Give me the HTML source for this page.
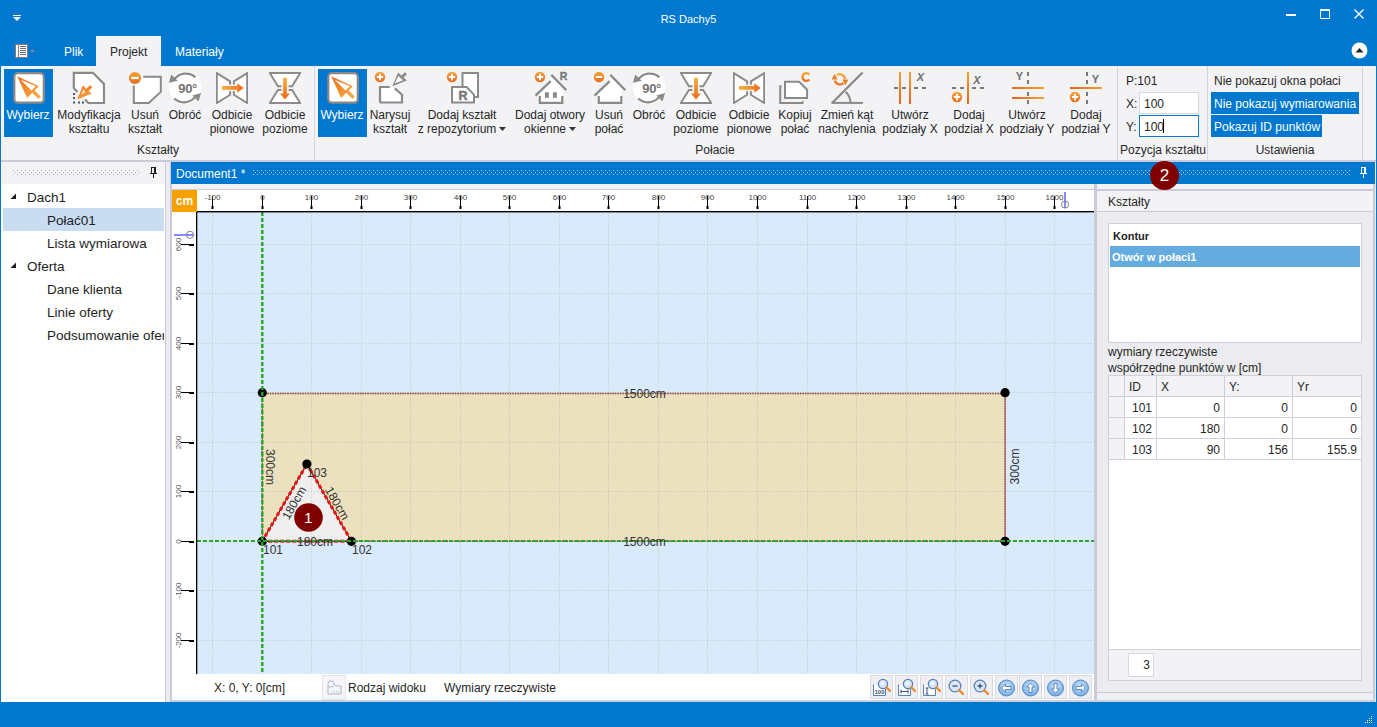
<!DOCTYPE html>
<html><head><meta charset="utf-8">
<style>
*{margin:0;padding:0;box-sizing:border-box}
html,body{width:1377px;height:727px;overflow:hidden}
body{position:relative;background:#0078cf;font-family:"Liberation Sans",sans-serif;font-size:12px;color:#262626}
.a{position:absolute}
.t{position:absolute;white-space:nowrap;line-height:14px}
.c{text-align:center}
svg{position:absolute;overflow:visible}
.dots{position:absolute;height:5px;background-image:radial-gradient(circle at 0.5px 0.5px,#bfc3d6 0.7px,transparent 0.8px);}
</style></head><body>

<!-- title bar -->
<div class="t" style="left:0;top:12px;width:1377px;text-align:center;color:#fff;font-size:11px">RS Dachy5</div>

<!-- tabs -->
<div class="a" style="left:96px;top:36px;width:65px;height:31px;background:#f3f3f6"></div>
<div class="t" style="left:64px;top:45px;color:#fff">Plik</div>
<div class="t" style="left:110px;top:45px;color:#262626">Projekt</div>
<div class="t" style="left:175px;top:45px;color:#fff">Materiały</div>

<!-- ribbon -->
<div class="a" style="left:1px;top:66px;width:1375px;height:95px;background:#f3f3f6"></div>
<div class="a" style="left:1px;top:160px;width:1375px;height:2px;background:#cacad8"></div>


<!-- ribbon content -->
<svg width="0" height="0"><defs>
<linearGradient id="og" x1="0" y1="0" x2="0.7" y2="1"><stop offset="0" stop-color="#ee6a1e"/><stop offset="1" stop-color="#f7a83e"/></linearGradient>
<linearGradient id="og2" x1="0" y1="0" x2="1" y2="0"><stop offset="0" stop-color="#f7b040"/><stop offset="1" stop-color="#ee6a1e"/></linearGradient>
<linearGradient id="og3" x1="0" y1="0" x2="0" y2="1"><stop offset="0" stop-color="#f7b040"/><stop offset="1" stop-color="#ee6a1e"/></linearGradient>
<symbol id="sel" viewBox="0 0 32 32"><rect x="1.3" y="1.2" width="29.5" height="29.5" rx="3.5" fill="#fff" stroke="#8c8888" stroke-width="2.2"/><path d="M4.2 4.2 L25.9 14.2 L21.5 18.5 L27.8 24.6 L25.5 26.9 L19.3 20.7 L14.1 26 Z M7.7 7.8 L18.5 18.6 L22.9 14.2 Z" fill="url(#og)" fill-rule="evenodd"/></symbol>
<symbol id="rot" viewBox="0 0 32 32"><circle cx="16.1" cy="15.6" r="16" fill="#fff"/><path d="M26.5 5.2 A14.5 14.5 0 0 0 5 7.8" fill="none" stroke="#8a8a8a" stroke-width="2.2"/><path d="M0.1 10.7 L2.1 2.6 L8.7 8.7 Z" fill="#8a8a8a"/><path d="M5.2 26.5 A14.5 14.5 0 0 0 27.2 23.5" fill="none" stroke="#8a8a8a" stroke-width="2.2"/><path d="M32.1 20.9 L29.5 29.5 L23.5 23.5 Z" fill="#8a8a8a"/><text x="18.6" y="20.9" font-size="13" font-weight="bold" text-anchor="middle" fill="#737373" font-family="Liberation Sans" letter-spacing="-0.3">90°</text></symbol>
<symbol id="fv" viewBox="0 0 32 32"><path d="M0.8 1.2 L14.1 9.4 V22.8 L0.8 31 Z M31.2 1.2 L17.9 9.4 V22.8 L31.2 31 Z" fill="#fff" stroke="#8c8c8c" stroke-width="2" stroke-linejoin="miter"/><rect x="13" y="12.6" width="6" height="6.6" fill="#f3f3f6"/><path d="M5.9 14.1 H21.2 V11.3 L27.8 15.9 L21.2 20.7 V17.7 H5.9 Z" fill="url(#og2)"/></symbol>
<symbol id="fh" viewBox="0 0 32 32"><path d="M0.8 1 H31.2 L23.1 14.3 H8.9 Z M0.8 31 H31.2 L23.1 17.9 H8.9 Z" fill="#fff" stroke="#8c8c8c" stroke-width="2"/><rect x="12.4" y="13" width="7.2" height="6.2" fill="#f3f3f6"/><path d="M14.1 5.7 H17.9 V21.4 H21 L16 27.5 L10.9 21.4 H14.1 Z" fill="url(#og3)"/></symbol>
<symbol id="pl" viewBox="0 0 14 14"><circle cx="7" cy="7" r="6.1" fill="url(#cg)"/><path d="M7 3.3 V10.7 M3.3 7 H10.7" stroke="#fff" stroke-width="2.2"/></symbol>
<symbol id="mi" viewBox="0 0 14 14"><circle cx="7" cy="7" r="6.1" fill="url(#cg)"/><path d="M3.2 7 H10.8" stroke="#fff" stroke-width="2.2"/></symbol>
<symbol id="house" viewBox="0 0 32 32"><path d="M4.8 31.2 V19.5 L15.7 9.1 L16.3 3.5 L27.3 14.5 V31.2 Z" fill="#fff"/><path d="M0.5 23.6 L15.7 9.1 M16.3 2.9 L31.4 18.1 M4.8 24 V30.9 H27.3 V24" fill="none" stroke="#8a8a8a" stroke-width="2.2"/></symbol>
<linearGradient id="cg" x1="0" y1="0" x2="0" y2="1"><stop offset="0" stop-color="#f6a535"/><stop offset="1" stop-color="#ea6b1f"/></linearGradient><linearGradient id="gv" x1="0" y1="0" x2="0" y2="32" gradientUnits="userSpaceOnUse"><stop offset="0" stop-color="#f5a030"/><stop offset="1" stop-color="#e8641c"/></linearGradient><linearGradient id="gh" x1="0" y1="0" x2="32" y2="0" gradientUnits="userSpaceOnUse"><stop offset="0" stop-color="#e8641c"/><stop offset="1" stop-color="#f5a030"/></linearGradient></defs></svg>

<div class="a" style="left:4px;top:69px;width:49px;height:68px;background:#0078cf"></div>
<svg style="left:13px;top:72px" width="32" height="32"><use href="#sel"/></svg>
<div class="t c" style="left:-22px;top:108px;width:100px;line-height:14px;color:#fff">Wybierz</div>

<svg style="left:73px;top:72px" width="32" height="32" viewBox="0 0 32 32"><path d="M0.8 0.8 H20 L31 12 V31 H15.4 L4 20 L0.8 16.4 Z" fill="#fff"/><path d="M0.8 16.4 V0.8 H20 L31 12 V31 H15.4 L12 27.4 M0.8 16.4 L4.6 20" fill="none" stroke="#8a8a8a" stroke-width="2.2"/><path d="M0 21 h2 v2 h-2z M0 25 h2 v2 h-2z M0 29.5 h2 v2 h-2z M5 29.5 h2 v2 h-2z M9 29.5 h2 v2 h-2z" fill="#555"/><path d="M4.1 27.6 L10.1 13.3 L13 17 L17 13 L19.5 15.5 L15.5 19 L18.9 21.6 Z" fill="url(#og)"/><path d="M8 23 L10.5 17 L12.5 20 Z" fill="#fff" opacity="0.8"/></svg>
<div class="t c" style="left:39px;top:108px;width:100px;line-height:14px">Modyfikacja<br>kształtu</div>

<svg style="left:129px;top:72px" width="33" height="32" viewBox="0 0 33 32"><path d="M4.8 4.8 H31.8 V19.9 L19.7 30.9 H4.8 Z" fill="#fff"/><path d="M14.2 4.8 H31.8 V19.9 L19.7 30.9 H4.8 V13.6" fill="none" stroke="#8a8a8a" stroke-width="2"/></svg>
<svg style="left:128px;top:71px" width="14" height="14"><use href="#mi"/></svg>
<div class="t c" style="left:95px;top:108px;width:100px;line-height:14px">Usuń<br>kształt</div>

<svg style="left:169px;top:72px" width="32" height="32"><use href="#rot"/></svg>
<div class="t c" style="left:135px;top:108px;width:100px;line-height:14px">Obróć</div>

<svg style="left:216px;top:72px" width="32" height="32"><use href="#fv"/></svg>
<div class="t c" style="left:182px;top:108px;width:100px;line-height:14px">Odbicie<br>pionowe</div>

<svg style="left:269px;top:72px" width="32" height="32"><use href="#fh"/></svg>
<div class="t c" style="left:235px;top:108px;width:100px;line-height:14px">Odbicie<br>poziome</div>

<div class="t c" style="left:108px;top:143px;width:100px">Kształty</div>
<div class="a" style="left:314px;top:66px;width:1px;height:94px;background:#d6d6e0"></div>

<div class="a" style="left:318px;top:69px;width:49px;height:68px;background:#0078cf"></div>
<svg style="left:327px;top:72px" width="32" height="32"><use href="#sel"/></svg>
<div class="t c" style="left:292px;top:108px;width:100px;line-height:14px;color:#fff">Wybierz</div>

<svg style="left:375px;top:72px" width="32" height="32" viewBox="0 0 32 32"><path d="M5 15 H15 L20 16.5 L27 22.5 V30.5 H5 Z" fill="#fff"/><path d="M5 30.5 V15 H14.7 M19.8 16.4 L27 22.8 V30.5 H5" fill="none" stroke="#8a8a8a" stroke-width="2.2"/><path d="M17.4 14.3 L23.1 0.6 L31.9 8.5 Z" fill="#8a8a8a"/><path d="M19.8 11.6 L23.4 4 L28 8.3 Z" fill="#fff"/><path d="M26 6 L31 1.3" stroke="#8a8a8a" stroke-width="2.8"/></svg>
<svg style="left:375px;top:72px" width="12" height="12" viewBox="1 1 12 12"><use href="#pl"/></svg>
<div class="t c" style="left:340px;top:108px;width:100px;line-height:14px">Narysuj<br>kształt</div>

<svg style="left:447px;top:72px" width="32" height="32" viewBox="0 0 32 32"><rect x="15.5" y="1" width="15.5" height="24" fill="#fff" stroke="#8a8a8a" stroke-width="2"/><path d="M5 15 H19.6 L27 22.6 V30.6 H5 Z" fill="#fff" stroke="#8a8a8a" stroke-width="2"/><text x="16" y="27.6" font-size="12.5" font-weight="bold" fill="#777" stroke="#777" stroke-width="0.5" text-anchor="middle" font-family="Liberation Sans">R</text></svg>
<svg style="left:447px;top:72px" width="12" height="12" viewBox="1 1 12 12"><use href="#pl"/></svg>
<div class="t c" style="left:412px;top:108px;width:100px;line-height:14px">Dodaj kształt<br>z repozytorium<svg style="position:relative;display:inline-block;vertical-align:middle;margin-left:3px;top:-1px" width="7" height="4" viewBox="0 0 7 4"><path d="M0 0H7L3.5 4Z" fill="#333"/></svg></div>

<svg style="left:535px;top:72px" width="32" height="32"><use href="#house"/></svg>
<svg style="left:535px;top:72px" width="32" height="32" viewBox="0 0 32 32"><rect x="9.9" y="20.3" width="4" height="5.5" fill="#8a8a8a"/><rect x="17.9" y="20.3" width="4" height="5.5" fill="#8a8a8a"/><text x="28.6" y="8" font-size="10.5" font-weight="bold" fill="#7a7a7a" stroke="#7a7a7a" stroke-width="0.4" text-anchor="middle" font-family="Liberation Sans">R</text></svg>
<svg style="left:535px;top:72px" width="12" height="12" viewBox="1 1 12 12"><use href="#pl"/></svg>
<div class="t c" style="left:500px;top:108px;width:100px;line-height:14px">Dodaj otwory<br>okienne<svg style="position:relative;display:inline-block;vertical-align:middle;margin-left:3px;top:-1px" width="7" height="4" viewBox="0 0 7 4"><path d="M0 0H7L3.5 4Z" fill="#333"/></svg></div>

<svg style="left:594px;top:72px" width="32" height="32"><use href="#house"/></svg>
<svg style="left:594px;top:72px" width="12" height="12" viewBox="1 1 12 12"><use href="#mi"/></svg>
<div class="t c" style="left:559px;top:108px;width:100px;line-height:14px">Usuń<br>połać</div>

<svg style="left:633px;top:72px" width="32" height="32"><use href="#rot"/></svg>
<div class="t c" style="left:599px;top:108px;width:100px;line-height:14px">Obróć</div>

<svg style="left:680px;top:72px" width="32" height="32"><use href="#fh"/></svg>
<div class="t c" style="left:646px;top:108px;width:100px;line-height:14px">Odbicie<br>poziome</div>

<svg style="left:733px;top:72px" width="32" height="32"><use href="#fv"/></svg>
<div class="t c" style="left:699px;top:108px;width:100px;line-height:14px">Odbicie<br>pionowe</div>

<svg style="left:779px;top:72px" width="33" height="32" viewBox="0 0 33 32"><path d="M2.6 14.3 H1.2 V31 H23.6 V29.3" fill="none" stroke="#8a8a8a" stroke-width="2"/><path d="M6 9.8 H20.2 L28.1 17.7 V26 H6 Z" fill="#fff" stroke="#8a8a8a" stroke-width="2"/><path d="M30.3 2.4 A3.9 3.9 0 1 0 30.3 7.6" fill="none" stroke="url(#cg)" stroke-width="2.3"/></svg>
<div class="t c" style="left:745px;top:108px;width:100px;line-height:14px">Kopiuj<br>połać</div>

<svg style="left:831px;top:72px" width="33" height="32" viewBox="0 0 33 32"><path d="M0.8 31.2 L31.6 0.5" stroke="#8a8a8a" stroke-width="2.3"/><path d="M0.6 30.9 H32" stroke="#8a8a8a" stroke-width="2"/><path d="M14.7 19.8 Q19 24 19.6 30.5" fill="none" stroke="#8a8a8a" stroke-width="2"/><path d="M3.9 8.6 A5 5 0 0 0 12.4 10.9 M6 3.2 A5 5 0 0 1 13.9 6.9" fill="none" stroke="url(#cg)" stroke-width="2.2"/><path d="M3.6 1.8 L0.6 7.6 H6.6 Z M14.4 13.2 L11.4 7.4 H17.4 Z" fill="#ef7f25"/></svg>
<div class="t c" style="left:797px;top:108px;width:100px;line-height:14px">Zmień kąt<br>nachylenia</div>

<svg style="left:894px;top:72px" width="32" height="32" viewBox="0 0 32 32"><rect x="5" y="0" width="2" height="32" fill="url(#gv)"/><rect x="15" y="0" width="2" height="32" fill="url(#gv)"/><path d="M0 15 h4 v2 h-4z M8 15 h4 v2 h-4z M20 15 h4 v2 h-4z M28 15 h4 v2 h-4z" fill="#7a7a7a"/><text x="26.3" y="9" font-size="11" font-weight="bold" font-style="italic" fill="#6e6e6e" text-anchor="middle" font-family="Liberation Sans">X</text></svg>
<div class="t c" style="left:860px;top:108px;width:100px;line-height:14px">Utwórz<br>podziały X</div>

<svg style="left:952px;top:72px" width="32" height="32" viewBox="0 0 32 32"><rect x="15" y="0" width="2" height="32" fill="url(#gv)"/><path d="M0 15 h4 v2 h-4z M8 15 h4 v2 h-4z M20 15 h4 v2 h-4z M28 15 h4 v2 h-4z" fill="#7a7a7a"/><text x="25" y="11.5" font-size="11" font-weight="bold" font-style="italic" fill="#6e6e6e" text-anchor="middle" font-family="Liberation Sans">X</text></svg>
<svg style="left:952px;top:91.8px" width="12" height="12" viewBox="1 1 12 12"><use href="#pl"/></svg>
<div class="t c" style="left:919px;top:108px;width:100px;line-height:14px">Dodaj<br>podział X</div>

<svg style="left:1012px;top:72px" width="32" height="32" viewBox="0 0 32 32"><rect x="0" y="15" width="32" height="2" fill="url(#gh)"/><rect x="0" y="25" width="32" height="2" fill="url(#gh)"/><path d="M15 0 h2 v4 h-2z M15 8 h2 v4 h-2z M15 20 h2 v4 h-2z M15 28 h2 v4 h-2z" fill="#7a7a7a"/><text x="7.4" y="7.8" font-size="11" font-weight="bold" fill="#6e6e6e" text-anchor="middle" font-family="Liberation Sans">Y</text></svg>
<div class="t c" style="left:977px;top:108px;width:100px;line-height:14px">Utwórz<br>podziały Y</div>

<svg style="left:1070px;top:72px" width="32" height="32" viewBox="0 0 32 32"><rect x="0" y="15" width="32" height="2" fill="url(#gh)"/><path d="M16 0 h2 v4 h-2z M16 8 h2 v4 h-2z M16 20 h2 v4 h-2z M16 28 h2 v4 h-2z" fill="#7a7a7a"/><text x="25.4" y="11" font-size="11" font-weight="bold" fill="#6e6e6e" text-anchor="middle" font-family="Liberation Sans">Y</text></svg>
<svg style="left:1070px;top:91.8px" width="12" height="12" viewBox="1 1 12 12"><use href="#pl"/></svg>
<div class="t c" style="left:1036px;top:108px;width:100px;line-height:14px">Dodaj<br>podział Y</div>

<div class="t c" style="left:665px;top:143px;width:100px">Połacie</div>
<div class="a" style="left:1117px;top:66px;width:1px;height:94px;background:#d6d6e0"></div>

<div class="t" style="left:1126px;top:74px">P:101</div>
<div class="t" style="left:1126px;top:97px">X:</div>
<div class="a" style="left:1139px;top:92px;width:60px;height:22px;background:#fff;border:1px solid #d8d8e2"></div>
<div class="t" style="left:1144px;top:97px">100</div>
<div class="t" style="left:1126px;top:120px">Y:</div>
<div class="a" style="left:1139px;top:115px;width:60px;height:22px;background:#fff;border:1px solid #0078cf"></div>
<div class="t" style="left:1144px;top:120px">100</div>
<div class="a" style="left:1163px;top:119px;width:1px;height:14px;background:#000"></div>
<div class="t c" style="left:1113px;top:143px;width:100px">Pozycja kształtu</div>
<div class="a" style="left:1207px;top:66px;width:1px;height:94px;background:#d6d6e0"></div>

<div class="t" style="left:1214px;top:74px">Nie pokazuj okna połaci</div>
<div class="a" style="left:1211px;top:92px;width:148px;height:22px;background:#0078cf"></div>
<div class="t" style="left:1214px;top:97px;color:#fff">Nie pokazuj wymiarowania</div>
<div class="a" style="left:1211px;top:115px;width:111px;height:22px;background:#0078cf"></div>
<div class="t" style="left:1214px;top:120px;color:#fff">Pokazuj ID punktów</div>
<div class="t c" style="left:1235px;top:143px;width:100px">Ustawienia</div>
<div class="a" style="left:1362px;top:66px;width:1px;height:94px;background:#d6d6e0"></div>

<!-- main area -->
<div class="a" style="left:1px;top:162px;width:1375px;height:540px;background:#ececf0"></div>
<div class="a" style="left:1px;top:162px;width:164px;height:22px;background:#f3f3f6"></div>
<svg style="left:13px;top:170px" width="127" height="5"><defs><pattern id="dp1" width="4" height="4" patternUnits="userSpaceOnUse"><rect x="0" y="0" width="1" height="1" fill="#b4b7cc"/><rect x="2" y="2" width="1" height="1" fill="#b4b7cc"/></pattern></defs><rect width="127" height="5" fill="url(#dp1)"/></svg>
<div class="a" style="left:1px;top:184px;width:164px;height:518px;background:#fff"></div>
<div class="a" style="left:165px;top:162px;width:1px;height:540px;background:#cacad8"></div>
<div class="a" style="left:170px;top:162px;width:2px;height:540px;background:#cacad8"></div>
<svg style="left:150px;top:166px" width="7" height="12" viewBox="0 0 7 12"><path d="M1 1 H6 V7 H1 Z M2 2 V7 H4 V2 Z M0 7 H7 V8 H0 Z M3 8 H4 V12 H3 Z" fill="#1e1e1e" fill-rule="evenodd"/></svg>
<div class="a" style="left:3px;top:208px;width:161px;height:23px;background:#c9ddf2"></div>
<div class="a" style="left:1px;top:184px;width:163px;height:517px;overflow:hidden">
<div class="t" style="left:26px;top:6px;font-size:13.5px;color:#1e1e1e;line-height:16px">Dach1</div>
<svg style="left:9px;top:9px" width="7" height="7" viewBox="0 0 7 7"><path d="M6 0.5 V6 H0.5 Z" fill="#1e1e1e"/></svg>
<div class="t" style="left:46px;top:29px;font-size:13.5px;color:#1e1e1e;line-height:16px">Połać01</div>
<div class="t" style="left:46px;top:52px;font-size:13.5px;color:#1e1e1e;line-height:16px">Lista wymiarowa</div>
<div class="t" style="left:26px;top:75px;font-size:13.5px;color:#1e1e1e;line-height:16px">Oferta</div>
<svg style="left:9px;top:78px" width="7" height="7" viewBox="0 0 7 7"><path d="M6 0.5 V6 H0.5 Z" fill="#1e1e1e"/></svg>
<div class="t" style="left:46px;top:98px;font-size:13.5px;color:#1e1e1e;line-height:16px">Dane klienta</div>
<div class="t" style="left:46px;top:121px;font-size:13.5px;color:#1e1e1e;line-height:16px">Linie oferty</div>
<div class="t" style="left:46px;top:144px;font-size:13.5px;color:#1e1e1e;line-height:16px">Podsumowanie oferty</div>
</div>
<div class="a" style="left:171px;top:162px;width:1204px;height:22px;background:#0078cf"></div>
<div class="t" style="left:176px;top:167px;color:#fff">Document1 *</div>
<svg style="left:253px;top:170px" width="1098" height="5"><defs><pattern id="dp2" width="4" height="4" patternUnits="userSpaceOnUse"><rect x="0" y="0" width="1" height="1" fill="#b9d3ef"/><rect x="2" y="2" width="1" height="1" fill="#b9d3ef"/></pattern></defs><rect width="1098" height="5" fill="url(#dp2)"/></svg>
<svg style="left:1360px;top:166px" width="7" height="12" viewBox="0 0 7 12"><path d="M1 1 H6 V7 H1 Z M2 2 V7 H4 V2 Z M0 7 H7 V8 H0 Z M3 8 H4 V12 H3 Z" fill="#fff" fill-rule="evenodd"/></svg>
<div class="a" style="left:172px;top:184px;width:1203px;height:5px;background:#f3f3f6"></div>
<div class="a" style="left:172px;top:189px;width:1203px;height:1px;background:#cacad8"></div>
<svg style="left:0;top:0" width="1377" height="727" viewBox="0 0 1377 727">
<defs><clipPath id="cv"><rect x="197" y="212" width="897" height="462"/></clipPath><clipPath id="rx"><rect x="197" y="190" width="897" height="21"/></clipPath><clipPath id="ry"><rect x="172" y="212" width="25" height="462"/></clipPath></defs>
<rect x="172" y="190" width="922" height="511" fill="#fff"/>
<rect x="197" y="212" width="897" height="462" fill="#d9eafa"/>
<g clip-path="url(#cv)">
<rect x="262.3" y="392.7" width="742.8" height="148.6" fill="#ebe1bf"/>
<path d="M262.3 541.3 L351.4 541.3 L306.9 464.0 Z" fill="#efefef"/>
<line x1="163.5" y1="212" x2="163.5" y2="674" stroke="rgba(120,130,140,0.05)" stroke-width="1"/><line x1="163.5" y1="212" x2="163.5" y2="674" stroke="rgba(110,110,115,0.17)" stroke-width="1" stroke-dasharray="1 2"/>
<line x1="212.5" y1="212" x2="212.5" y2="674" stroke="rgba(120,130,140,0.05)" stroke-width="1"/><line x1="212.5" y1="212" x2="212.5" y2="674" stroke="rgba(110,110,115,0.17)" stroke-width="1" stroke-dasharray="1 2"/>
<line x1="262.5" y1="212" x2="262.5" y2="674" stroke="rgba(120,130,140,0.05)" stroke-width="1"/><line x1="262.5" y1="212" x2="262.5" y2="674" stroke="rgba(110,110,115,0.17)" stroke-width="1" stroke-dasharray="1 2"/>
<line x1="311.5" y1="212" x2="311.5" y2="674" stroke="rgba(120,130,140,0.05)" stroke-width="1"/><line x1="311.5" y1="212" x2="311.5" y2="674" stroke="rgba(110,110,115,0.17)" stroke-width="1" stroke-dasharray="1 2"/>
<line x1="361.5" y1="212" x2="361.5" y2="674" stroke="rgba(120,130,140,0.05)" stroke-width="1"/><line x1="361.5" y1="212" x2="361.5" y2="674" stroke="rgba(110,110,115,0.17)" stroke-width="1" stroke-dasharray="1 2"/>
<line x1="410.5" y1="212" x2="410.5" y2="674" stroke="rgba(120,130,140,0.05)" stroke-width="1"/><line x1="410.5" y1="212" x2="410.5" y2="674" stroke="rgba(110,110,115,0.17)" stroke-width="1" stroke-dasharray="1 2"/>
<line x1="460.5" y1="212" x2="460.5" y2="674" stroke="rgba(120,130,140,0.05)" stroke-width="1"/><line x1="460.5" y1="212" x2="460.5" y2="674" stroke="rgba(110,110,115,0.17)" stroke-width="1" stroke-dasharray="1 2"/>
<line x1="509.5" y1="212" x2="509.5" y2="674" stroke="rgba(120,130,140,0.05)" stroke-width="1"/><line x1="509.5" y1="212" x2="509.5" y2="674" stroke="rgba(110,110,115,0.17)" stroke-width="1" stroke-dasharray="1 2"/>
<line x1="559.5" y1="212" x2="559.5" y2="674" stroke="rgba(120,130,140,0.05)" stroke-width="1"/><line x1="559.5" y1="212" x2="559.5" y2="674" stroke="rgba(110,110,115,0.17)" stroke-width="1" stroke-dasharray="1 2"/>
<line x1="608.5" y1="212" x2="608.5" y2="674" stroke="rgba(120,130,140,0.05)" stroke-width="1"/><line x1="608.5" y1="212" x2="608.5" y2="674" stroke="rgba(110,110,115,0.17)" stroke-width="1" stroke-dasharray="1 2"/>
<line x1="658.5" y1="212" x2="658.5" y2="674" stroke="rgba(120,130,140,0.05)" stroke-width="1"/><line x1="658.5" y1="212" x2="658.5" y2="674" stroke="rgba(110,110,115,0.17)" stroke-width="1" stroke-dasharray="1 2"/>
<line x1="707.5" y1="212" x2="707.5" y2="674" stroke="rgba(120,130,140,0.05)" stroke-width="1"/><line x1="707.5" y1="212" x2="707.5" y2="674" stroke="rgba(110,110,115,0.17)" stroke-width="1" stroke-dasharray="1 2"/>
<line x1="757.5" y1="212" x2="757.5" y2="674" stroke="rgba(120,130,140,0.05)" stroke-width="1"/><line x1="757.5" y1="212" x2="757.5" y2="674" stroke="rgba(110,110,115,0.17)" stroke-width="1" stroke-dasharray="1 2"/>
<line x1="807.5" y1="212" x2="807.5" y2="674" stroke="rgba(120,130,140,0.05)" stroke-width="1"/><line x1="807.5" y1="212" x2="807.5" y2="674" stroke="rgba(110,110,115,0.17)" stroke-width="1" stroke-dasharray="1 2"/>
<line x1="856.5" y1="212" x2="856.5" y2="674" stroke="rgba(120,130,140,0.05)" stroke-width="1"/><line x1="856.5" y1="212" x2="856.5" y2="674" stroke="rgba(110,110,115,0.17)" stroke-width="1" stroke-dasharray="1 2"/>
<line x1="906.5" y1="212" x2="906.5" y2="674" stroke="rgba(120,130,140,0.05)" stroke-width="1"/><line x1="906.5" y1="212" x2="906.5" y2="674" stroke="rgba(110,110,115,0.17)" stroke-width="1" stroke-dasharray="1 2"/>
<line x1="955.5" y1="212" x2="955.5" y2="674" stroke="rgba(120,130,140,0.05)" stroke-width="1"/><line x1="955.5" y1="212" x2="955.5" y2="674" stroke="rgba(110,110,115,0.17)" stroke-width="1" stroke-dasharray="1 2"/>
<line x1="1005.5" y1="212" x2="1005.5" y2="674" stroke="rgba(120,130,140,0.05)" stroke-width="1"/><line x1="1005.5" y1="212" x2="1005.5" y2="674" stroke="rgba(110,110,115,0.17)" stroke-width="1" stroke-dasharray="1 2"/>
<line x1="1054.5" y1="212" x2="1054.5" y2="674" stroke="rgba(120,130,140,0.05)" stroke-width="1"/><line x1="1054.5" y1="212" x2="1054.5" y2="674" stroke="rgba(110,110,115,0.17)" stroke-width="1" stroke-dasharray="1 2"/>
<line x1="1104.5" y1="212" x2="1104.5" y2="674" stroke="rgba(120,130,140,0.05)" stroke-width="1"/><line x1="1104.5" y1="212" x2="1104.5" y2="674" stroke="rgba(110,110,115,0.17)" stroke-width="1" stroke-dasharray="1 2"/>
<line x1="1153.5" y1="212" x2="1153.5" y2="674" stroke="rgba(120,130,140,0.05)" stroke-width="1"/><line x1="1153.5" y1="212" x2="1153.5" y2="674" stroke="rgba(110,110,115,0.17)" stroke-width="1" stroke-dasharray="1 2"/>
<line x1="197" y1="689.5" x2="1094" y2="689.5" stroke="rgba(120,130,140,0.05)" stroke-width="1"/><line x1="197" y1="689.5" x2="1094" y2="689.5" stroke="rgba(110,110,115,0.17)" stroke-width="1" stroke-dasharray="1 2"/>
<line x1="197" y1="640.5" x2="1094" y2="640.5" stroke="rgba(120,130,140,0.05)" stroke-width="1"/><line x1="197" y1="640.5" x2="1094" y2="640.5" stroke="rgba(110,110,115,0.17)" stroke-width="1" stroke-dasharray="1 2"/>
<line x1="197" y1="590.5" x2="1094" y2="590.5" stroke="rgba(120,130,140,0.05)" stroke-width="1"/><line x1="197" y1="590.5" x2="1094" y2="590.5" stroke="rgba(110,110,115,0.17)" stroke-width="1" stroke-dasharray="1 2"/>
<line x1="197" y1="541.5" x2="1094" y2="541.5" stroke="rgba(120,130,140,0.05)" stroke-width="1"/><line x1="197" y1="541.5" x2="1094" y2="541.5" stroke="rgba(110,110,115,0.17)" stroke-width="1" stroke-dasharray="1 2"/>
<line x1="197" y1="491.5" x2="1094" y2="491.5" stroke="rgba(120,130,140,0.05)" stroke-width="1"/><line x1="197" y1="491.5" x2="1094" y2="491.5" stroke="rgba(110,110,115,0.17)" stroke-width="1" stroke-dasharray="1 2"/>
<line x1="197" y1="442.5" x2="1094" y2="442.5" stroke="rgba(120,130,140,0.05)" stroke-width="1"/><line x1="197" y1="442.5" x2="1094" y2="442.5" stroke="rgba(110,110,115,0.17)" stroke-width="1" stroke-dasharray="1 2"/>
<line x1="197" y1="392.5" x2="1094" y2="392.5" stroke="rgba(120,130,140,0.05)" stroke-width="1"/><line x1="197" y1="392.5" x2="1094" y2="392.5" stroke="rgba(110,110,115,0.17)" stroke-width="1" stroke-dasharray="1 2"/>
<line x1="197" y1="343.5" x2="1094" y2="343.5" stroke="rgba(120,130,140,0.05)" stroke-width="1"/><line x1="197" y1="343.5" x2="1094" y2="343.5" stroke="rgba(110,110,115,0.17)" stroke-width="1" stroke-dasharray="1 2"/>
<line x1="197" y1="293.5" x2="1094" y2="293.5" stroke="rgba(120,130,140,0.05)" stroke-width="1"/><line x1="197" y1="293.5" x2="1094" y2="293.5" stroke="rgba(110,110,115,0.17)" stroke-width="1" stroke-dasharray="1 2"/>
<line x1="197" y1="244.5" x2="1094" y2="244.5" stroke="rgba(120,130,140,0.05)" stroke-width="1"/><line x1="197" y1="244.5" x2="1094" y2="244.5" stroke="rgba(110,110,115,0.17)" stroke-width="1" stroke-dasharray="1 2"/>
<line x1="197" y1="194.5" x2="1094" y2="194.5" stroke="rgba(120,130,140,0.05)" stroke-width="1"/><line x1="197" y1="194.5" x2="1094" y2="194.5" stroke="rgba(110,110,115,0.17)" stroke-width="1" stroke-dasharray="1 2"/>
<path d="M262.3 393.5 H1005.1 V541.3 H262.3 Z" fill="none" stroke="#8a3838" stroke-width="1.4" stroke-dasharray="1.5 1"/>
<path d="M262.3 541.3 L351.4 541.3 L306.9 464.0 Z" fill="none" stroke="#111" stroke-width="1"/>
<path d="M262.3 541.3 L351.4 541.3 L306.9 464.0 Z" fill="none" stroke="#ee1111" stroke-width="3" stroke-dasharray="4 2"/>
<line x1="1005.1" y1="392.7" x2="1005.1" y2="541.3" stroke="#b06060" stroke-width="1"/>
<circle cx="262.3" cy="392.7" r="4.6" fill="#000"/>
<circle cx="1005.1" cy="392.7" r="4.6" fill="#000"/>
<circle cx="1005.1" cy="541.3" r="4.6" fill="#000"/>
<circle cx="262.3" cy="541.3" r="4.6" fill="#000"/>
<circle cx="351.4" cy="541.3" r="4.6" fill="#000"/>
<circle cx="306.9" cy="464.0" r="4.6" fill="#000"/>
<line x1="262.3" y1="212" x2="262.3" y2="674" stroke="#2aa52a" stroke-width="2.4" stroke-dasharray="4 2"/>
<line x1="197" y1="541.0" x2="1094" y2="541.0" stroke="#2aa52a" stroke-width="2" stroke-dasharray="4 2"/>
<text x="644.5" y="398.0" font-size="12" fill="#333" text-anchor="middle" font-family="Liberation Sans">1500cm</text>
<text x="644.5" y="546.0" font-size="12" fill="#333" text-anchor="middle" font-family="Liberation Sans">1500cm</text>
<text x="315.0" y="546.0" font-size="12" fill="#333" text-anchor="middle" font-family="Liberation Sans">180cm</text>
<text dominant-baseline="central" x="1014.6" y="466.5" font-size="12" fill="#333" text-anchor="middle" font-family="Liberation Sans" transform="rotate(-90 1014.6 466.5)">300cm</text>
<text x="266.0" y="467.0" font-size="12" fill="#333" text-anchor="middle" font-family="Liberation Sans" transform="rotate(90 266.0 467.0)">300cm</text>
<text x="263.0" y="554.0" font-size="12" fill="#333" text-anchor="start" font-family="Liberation Sans">101</text>
<text x="352.0" y="554.0" font-size="12" fill="#333" text-anchor="start" font-family="Liberation Sans">102</text>
<text x="307.0" y="477.0" font-size="12" fill="#333" text-anchor="start" font-family="Liberation Sans">103</text>
<text dominant-baseline="central" x="294.2" y="503.0" font-size="12" fill="#333" text-anchor="middle" font-family="Liberation Sans" transform="rotate(-60 294.2 503.0)">180cm</text>
<text dominant-baseline="central" x="337.1" y="503.4" font-size="12" fill="#333" text-anchor="middle" font-family="Liberation Sans" transform="rotate(60 337.1 503.4)">180cm</text>
<circle cx="308.5" cy="517.5" r="14.3" fill="#800000"/>
<text x="308.2" y="522.8" font-size="15.5" fill="#fff" text-anchor="middle" font-family="Liberation Sans">1</text>
</g>
<g clip-path="url(#rx)">
<line x1="212.5" y1="196" x2="212.5" y2="209" stroke="#000" stroke-width="1"/>
<rect x="211.5" y="206" width="2" height="3" fill="#000"/>
<text x="212.5" y="200.0" font-size="8" fill="#444" text-anchor="middle" font-family="Liberation Sans">-100</text>
<line x1="262.5" y1="196" x2="262.5" y2="209" stroke="#000" stroke-width="1"/>
<rect x="261.5" y="206" width="2" height="3" fill="#000"/>
<text x="262.5" y="200.0" font-size="8" fill="#444" text-anchor="middle" font-family="Liberation Sans">0</text>
<line x1="311.5" y1="196" x2="311.5" y2="209" stroke="#000" stroke-width="1"/>
<rect x="310.5" y="206" width="2" height="3" fill="#000"/>
<text x="311.5" y="200.0" font-size="8" fill="#444" text-anchor="middle" font-family="Liberation Sans">100</text>
<line x1="361.5" y1="196" x2="361.5" y2="209" stroke="#000" stroke-width="1"/>
<rect x="360.5" y="206" width="2" height="3" fill="#000"/>
<text x="361.5" y="200.0" font-size="8" fill="#444" text-anchor="middle" font-family="Liberation Sans">200</text>
<line x1="410.5" y1="196" x2="410.5" y2="209" stroke="#000" stroke-width="1"/>
<rect x="409.5" y="206" width="2" height="3" fill="#000"/>
<text x="410.5" y="200.0" font-size="8" fill="#444" text-anchor="middle" font-family="Liberation Sans">300</text>
<line x1="460.5" y1="196" x2="460.5" y2="209" stroke="#000" stroke-width="1"/>
<rect x="459.5" y="206" width="2" height="3" fill="#000"/>
<text x="460.5" y="200.0" font-size="8" fill="#444" text-anchor="middle" font-family="Liberation Sans">400</text>
<line x1="509.5" y1="196" x2="509.5" y2="209" stroke="#000" stroke-width="1"/>
<rect x="508.5" y="206" width="2" height="3" fill="#000"/>
<text x="509.5" y="200.0" font-size="8" fill="#444" text-anchor="middle" font-family="Liberation Sans">500</text>
<line x1="559.5" y1="196" x2="559.5" y2="209" stroke="#000" stroke-width="1"/>
<rect x="558.5" y="206" width="2" height="3" fill="#000"/>
<text x="559.5" y="200.0" font-size="8" fill="#444" text-anchor="middle" font-family="Liberation Sans">600</text>
<line x1="608.5" y1="196" x2="608.5" y2="209" stroke="#000" stroke-width="1"/>
<rect x="607.5" y="206" width="2" height="3" fill="#000"/>
<text x="608.5" y="200.0" font-size="8" fill="#444" text-anchor="middle" font-family="Liberation Sans">700</text>
<line x1="658.5" y1="196" x2="658.5" y2="209" stroke="#000" stroke-width="1"/>
<rect x="657.5" y="206" width="2" height="3" fill="#000"/>
<text x="658.5" y="200.0" font-size="8" fill="#444" text-anchor="middle" font-family="Liberation Sans">800</text>
<line x1="707.5" y1="196" x2="707.5" y2="209" stroke="#000" stroke-width="1"/>
<rect x="706.5" y="206" width="2" height="3" fill="#000"/>
<text x="707.5" y="200.0" font-size="8" fill="#444" text-anchor="middle" font-family="Liberation Sans">900</text>
<line x1="757.5" y1="196" x2="757.5" y2="209" stroke="#000" stroke-width="1"/>
<rect x="756.5" y="206" width="2" height="3" fill="#000"/>
<text x="757.5" y="200.0" font-size="8" fill="#444" text-anchor="middle" font-family="Liberation Sans">1000</text>
<line x1="807.5" y1="196" x2="807.5" y2="209" stroke="#000" stroke-width="1"/>
<rect x="806.5" y="206" width="2" height="3" fill="#000"/>
<text x="807.5" y="200.0" font-size="8" fill="#444" text-anchor="middle" font-family="Liberation Sans">1100</text>
<line x1="856.5" y1="196" x2="856.5" y2="209" stroke="#000" stroke-width="1"/>
<rect x="855.5" y="206" width="2" height="3" fill="#000"/>
<text x="856.5" y="200.0" font-size="8" fill="#444" text-anchor="middle" font-family="Liberation Sans">1200</text>
<line x1="906.5" y1="196" x2="906.5" y2="209" stroke="#000" stroke-width="1"/>
<rect x="905.5" y="206" width="2" height="3" fill="#000"/>
<text x="906.5" y="200.0" font-size="8" fill="#444" text-anchor="middle" font-family="Liberation Sans">1300</text>
<line x1="955.5" y1="196" x2="955.5" y2="209" stroke="#000" stroke-width="1"/>
<rect x="954.5" y="206" width="2" height="3" fill="#000"/>
<text x="955.5" y="200.0" font-size="8" fill="#444" text-anchor="middle" font-family="Liberation Sans">1400</text>
<line x1="1005.5" y1="196" x2="1005.5" y2="209" stroke="#000" stroke-width="1"/>
<rect x="1004.5" y="206" width="2" height="3" fill="#000"/>
<text x="1005.5" y="200.0" font-size="8" fill="#444" text-anchor="middle" font-family="Liberation Sans">1500</text>
<line x1="1054.5" y1="196" x2="1054.5" y2="209" stroke="#000" stroke-width="1"/>
<rect x="1053.5" y="206" width="2" height="3" fill="#000"/>
<text x="1054.5" y="200.0" font-size="8" fill="#444" text-anchor="middle" font-family="Liberation Sans">1600</text>
<line x1="1065" y1="192" x2="1065" y2="208" stroke="#6b6bff" stroke-width="1.6"/><circle cx="1065" cy="204.5" r="3.6" fill="none" stroke="#777" stroke-width="0.9"/>
</g>
<rect x="196" y="211" width="898" height="1.4" fill="#000"/>
<g clip-path="url(#ry)">
<line x1="181" y1="689.5" x2="194" y2="689.5" stroke="#000" stroke-width="1"/>
<rect x="189" y="689.0" width="5" height="2" fill="#000"/>
<text dominant-baseline="central" x="178.5" y="689.5" font-size="8" fill="#555" text-anchor="middle" font-family="Liberation Sans" transform="rotate(-90 178.5 689.5)">-300</text>
<line x1="181" y1="640.5" x2="194" y2="640.5" stroke="#000" stroke-width="1"/>
<rect x="189" y="640.0" width="5" height="2" fill="#000"/>
<text dominant-baseline="central" x="178.5" y="640.5" font-size="8" fill="#555" text-anchor="middle" font-family="Liberation Sans" transform="rotate(-90 178.5 640.5)">-200</text>
<line x1="181" y1="590.5" x2="194" y2="590.5" stroke="#000" stroke-width="1"/>
<rect x="189" y="590.0" width="5" height="2" fill="#000"/>
<text dominant-baseline="central" x="178.5" y="590.5" font-size="8" fill="#555" text-anchor="middle" font-family="Liberation Sans" transform="rotate(-90 178.5 590.5)">-100</text>
<line x1="181" y1="541.5" x2="194" y2="541.5" stroke="#000" stroke-width="1"/>
<rect x="189" y="541.0" width="5" height="2" fill="#000"/>
<text dominant-baseline="central" x="178.5" y="541.5" font-size="8" fill="#555" text-anchor="middle" font-family="Liberation Sans" transform="rotate(-90 178.5 541.5)">0</text>
<line x1="181" y1="491.5" x2="194" y2="491.5" stroke="#000" stroke-width="1"/>
<rect x="189" y="491.0" width="5" height="2" fill="#000"/>
<text dominant-baseline="central" x="178.5" y="491.5" font-size="8" fill="#555" text-anchor="middle" font-family="Liberation Sans" transform="rotate(-90 178.5 491.5)">100</text>
<line x1="181" y1="442.5" x2="194" y2="442.5" stroke="#000" stroke-width="1"/>
<rect x="189" y="442.0" width="5" height="2" fill="#000"/>
<text dominant-baseline="central" x="178.5" y="442.5" font-size="8" fill="#555" text-anchor="middle" font-family="Liberation Sans" transform="rotate(-90 178.5 442.5)">200</text>
<line x1="181" y1="392.5" x2="194" y2="392.5" stroke="#000" stroke-width="1"/>
<rect x="189" y="392.0" width="5" height="2" fill="#000"/>
<text dominant-baseline="central" x="178.5" y="392.5" font-size="8" fill="#555" text-anchor="middle" font-family="Liberation Sans" transform="rotate(-90 178.5 392.5)">300</text>
<line x1="181" y1="343.5" x2="194" y2="343.5" stroke="#000" stroke-width="1"/>
<rect x="189" y="343.0" width="5" height="2" fill="#000"/>
<text dominant-baseline="central" x="178.5" y="343.5" font-size="8" fill="#555" text-anchor="middle" font-family="Liberation Sans" transform="rotate(-90 178.5 343.5)">400</text>
<line x1="181" y1="293.5" x2="194" y2="293.5" stroke="#000" stroke-width="1"/>
<rect x="189" y="293.0" width="5" height="2" fill="#000"/>
<text dominant-baseline="central" x="178.5" y="293.5" font-size="8" fill="#555" text-anchor="middle" font-family="Liberation Sans" transform="rotate(-90 178.5 293.5)">500</text>
<line x1="181" y1="244.5" x2="194" y2="244.5" stroke="#000" stroke-width="1"/>
<rect x="189" y="244.0" width="5" height="2" fill="#000"/>
<text dominant-baseline="central" x="178.5" y="244.5" font-size="8" fill="#555" text-anchor="middle" font-family="Liberation Sans" transform="rotate(-90 178.5 244.5)">600</text>
<line x1="181" y1="194.5" x2="194" y2="194.5" stroke="#000" stroke-width="1"/>
<rect x="189" y="194.0" width="5" height="2" fill="#000"/>
<text dominant-baseline="central" x="178.5" y="194.5" font-size="8" fill="#555" text-anchor="middle" font-family="Liberation Sans" transform="rotate(-90 178.5 194.5)">700</text>
<line x1="174" y1="235" x2="193.5" y2="235" stroke="#6b6bff" stroke-width="1.6"/><circle cx="190" cy="234.8" r="3.6" fill="none" stroke="#777" stroke-width="0.9"/>
</g>
<rect x="196" y="211" width="1.3" height="463" fill="#000"/>
<rect x="172" y="190" width="25" height="22" fill="#f7a100"/>
<text x="184.5" y="205" font-size="12" font-weight="bold" fill="#fff" text-anchor="middle" font-family="Liberation Sans">cm</text>
</svg>
<div class="a" style="left:1094px;top:184px;width:3px;height:517px;background:#cacad8"></div>
<div class="a" style="left:172px;top:700px;width:1203px;height:2px;background:#cfcfdc"></div>
<div class="t" style="left:214px;top:681px">X: 0, Y: 0[cm]</div>
<div class="a" style="left:322px;top:675px;width:24px;height:25px;background:#f6f6f8;border:1px solid #e4e4ea"></div>
<div class="t" style="left:348px;top:681px">Rodzaj widoku</div>
<div class="t" style="left:444px;top:681px">Wymiary rzeczywiste</div>
<div class="a" style="left:870.0px;top:675px;width:23px;height:24px;background:#efeff3;border:1px solid #dadae4"></div>
<div class="a" style="left:894.9px;top:675px;width:23px;height:24px;background:#efeff3;border:1px solid #dadae4"></div>
<div class="a" style="left:919.8px;top:675px;width:23px;height:24px;background:#efeff3;border:1px solid #dadae4"></div>
<div class="a" style="left:944.7px;top:675px;width:23px;height:24px;background:#efeff3;border:1px solid #dadae4"></div>
<div class="a" style="left:969.6px;top:675px;width:23px;height:24px;background:#efeff3;border:1px solid #dadae4"></div>
<div class="a" style="left:994.5px;top:675px;width:23px;height:24px;background:#efeff3;border:1px solid #dadae4"></div>
<div class="a" style="left:1019.4px;top:675px;width:23px;height:24px;background:#efeff3;border:1px solid #dadae4"></div>
<div class="a" style="left:1044.3px;top:675px;width:23px;height:24px;background:#efeff3;border:1px solid #dadae4"></div>
<div class="a" style="left:1069.2px;top:675px;width:23px;height:24px;background:#efeff3;border:1px solid #dadae4"></div>
<div class="a" style="left:1097px;top:190px;width:276px;height:22px;background:#f3f3f6;border-top:1px solid #cacad8;border-bottom:1px solid #cacad8"></div>
<div class="a" style="left:1373px;top:184px;width:2px;height:517px;background:#cacad8"></div>
<div class="t" style="left:1108px;top:195px">Kształty</div>
<div class="a" style="left:1108px;top:223px;width:254px;height:120px;background:#fff;border:1px solid #cfcfdc"></div>
<div class="t" style="left:1113px;top:229px;font-weight:bold;font-size:11px;color:#1e1e1e">Kontur</div>
<div class="a" style="left:1110px;top:246px;width:250px;height:21px;background:#64acdf"></div>
<div class="t" style="left:1112px;top:250px;font-weight:bold;font-size:11px;color:#fff">Otwór w połaci1</div>
<div class="t" style="left:1108px;top:345px">wymiary rzeczywiste</div>
<div class="t" style="left:1108px;top:361px">współrzędne punktów w [cm]</div>
<div class="a" style="left:1108px;top:375px;width:254px;height:306px;background:#fff;border:1px solid #cfcfdc"></div>
<div class="a" style="left:1109px;top:376px;width:252px;height:21px;background:#f3f3f6"></div>
<div class="a" style="left:1109px;top:397px;width:16px;height:63px;background:#f3f3f6"></div>
<div class="a" style="left:1109px;top:649px;width:252px;height:31px;background:#f3f3f6;border-top:1px solid #cfcfdc"></div>
<div class="a" style="left:1124px;top:376px;width:1px;height:84px;background:#cfcfdc"></div>
<div class="a" style="left:1156px;top:376px;width:1px;height:84px;background:#cfcfdc"></div>
<div class="a" style="left:1224px;top:376px;width:1px;height:84px;background:#cfcfdc"></div>
<div class="a" style="left:1292px;top:376px;width:1px;height:84px;background:#cfcfdc"></div>
<div class="a" style="left:1109px;top:396px;width:252px;height:1px;background:#cfcfdc"></div>
<div class="a" style="left:1109px;top:417px;width:252px;height:1px;background:#cfcfdc"></div>
<div class="a" style="left:1109px;top:438px;width:252px;height:1px;background:#cfcfdc"></div>
<div class="a" style="left:1109px;top:459px;width:252px;height:1px;background:#cfcfdc"></div>
<div class="t" style="left:1129px;top:380px">ID</div>
<div class="t" style="left:1161px;top:380px">X</div>
<div class="t" style="left:1229px;top:380px">Y:</div>
<div class="t" style="left:1297px;top:380px">Yr</div>
<div class="t" style="left:1125px;top:401px;width:27px;text-align:right">101</div>
<div class="t" style="left:1157px;top:401px;width:63px;text-align:right">0</div>
<div class="t" style="left:1225px;top:401px;width:63px;text-align:right">0</div>
<div class="t" style="left:1293px;top:401px;width:64px;text-align:right">0</div>
<div class="t" style="left:1125px;top:422px;width:27px;text-align:right">102</div>
<div class="t" style="left:1157px;top:422px;width:63px;text-align:right">180</div>
<div class="t" style="left:1225px;top:422px;width:63px;text-align:right">0</div>
<div class="t" style="left:1293px;top:422px;width:64px;text-align:right">0</div>
<div class="t" style="left:1125px;top:443px;width:27px;text-align:right">103</div>
<div class="t" style="left:1157px;top:443px;width:63px;text-align:right">90</div>
<div class="t" style="left:1225px;top:443px;width:63px;text-align:right">156</div>
<div class="t" style="left:1293px;top:443px;width:64px;text-align:right">155.9</div>
<div class="a" style="left:1128px;top:653px;width:26px;height:24px;background:#fff;border:1px solid #d8d8e2"></div>
<div class="t" style="left:1128px;top:658px;width:22px;text-align:right">3</div>
<div class="a" style="left:1097px;top:692px;width:276px;height:1px;background:#cacad8"></div>
<div class="a" style="left:1097px;top:693px;width:276px;height:7px;background:#f0f0f4"></div>
<div class="a" style="left:1150px;top:161px;width:29px;height:29px;border-radius:50%;background:#800000"></div>
<div class="t" style="left:1150px;top:167px;width:29px;text-align:center;color:#fff;font-size:17px;line-height:17px">2</div>
<svg style="left:13px;top:15px" width="9" height="7" viewBox="0 0 9 7"><rect x="0" y="0" width="8" height="1" fill="#fff"/><path d="M0 2 H8 L4 6 Z" fill="#fff"/></svg>
<svg style="left:15px;top:44px" width="21" height="14" viewBox="0 0 21 14"><rect x="0.5" y="0.5" width="12" height="13" fill="#fff" stroke="#857a76"/><rect x="3" y="1" width="1" height="12" fill="#857a76"/><path d="M5 2.5 H11 M5 4.5 H11 M5 6.5 H11 M5 8.5 H11 M5 10.5 H11" stroke="#6c6c6c" stroke-width="1"/><path d="M15 6 H20 L17.5 8.5 Z" fill="#8a8a8a"/></svg>
<div class="a" style="left:1286px;top:14px;width:10px;height:2px;background:#fff"></div>
<div class="a" style="left:1320px;top:9px;width:10px;height:10px;border:1px solid #fff;border-top-width:2px"></div>
<svg style="left:1354px;top:9px" width="10" height="10" viewBox="0 0 10 10"><path d="M0.5 0.5 L9.5 9.5 M9.5 0.5 L0.5 9.5" stroke="#fff" stroke-width="1.4"/></svg>
<svg style="left:1351px;top:42px" width="17" height="17" viewBox="0 0 17 17"><circle cx="8.5" cy="8.5" r="8" fill="#fff"/><path d="M4.5 10.5 L8.5 6 L12.5 10.5 Z" fill="#222"/></svg>
<svg style="left:870.0px;top:676px" width="23" height="23" viewBox="0 0 23 23"><path d="M3.5 8.5 V19.5 H15.5 V13" fill="#fff" stroke="#5a7fb5" stroke-width="1"/><rect x="4" y="9" width="11" height="10" fill="#fff"/><circle cx="13" cy="8" r="4.6" fill="#d6e6f8" stroke="#5a7fb5" stroke-width="1.3"/><circle cx="12.3" cy="7.3" r="2" fill="#fff" opacity="0.6"/><path d="M16.3 11.3 L20 15" stroke="#e8892a" stroke-width="2.2" stroke-linecap="round"/><text x="9.5" y="18" font-size="6" fill="#3a4f7a" text-anchor="middle" font-family="Liberation Sans" font-weight="bold">100</text></svg>
<svg style="left:894.9px;top:676px" width="23" height="23" viewBox="0 0 23 23"><path d="M3.5 8.5 V19.5 H15.5 V13" fill="#fff" stroke="#5a7fb5" stroke-width="1"/><rect x="4" y="9" width="11" height="10" fill="#fff"/><circle cx="13" cy="8" r="4.6" fill="#d6e6f8" stroke="#5a7fb5" stroke-width="1.3"/><circle cx="12.3" cy="7.3" r="2" fill="#fff" opacity="0.6"/><path d="M16.3 11.3 L20 15" stroke="#e8892a" stroke-width="2.2" stroke-linecap="round"/><path d="M6 15.5 H13 M6 13.5 V17.5 M13 13.5 V17.5" stroke="#3a4f7a" stroke-width="1"/></svg>
<svg style="left:919.8px;top:676px" width="23" height="23" viewBox="0 0 23 23"><path d="M3.5 8.5 V19.5 H15.5 V13" fill="#fff" stroke="#5a7fb5" stroke-width="1"/><rect x="4" y="9" width="11" height="10" fill="#fff"/><circle cx="13" cy="8" r="4.6" fill="#d6e6f8" stroke="#5a7fb5" stroke-width="1.3"/><circle cx="12.3" cy="7.3" r="2" fill="#fff" opacity="0.6"/><path d="M16.3 11.3 L20 15" stroke="#e8892a" stroke-width="2.2" stroke-linecap="round"/><path d="M7 12 V18 M5.5 12 H8.5 M5.5 18 H8.5" stroke="#3a4f7a" stroke-width="1"/></svg>
<svg style="left:944.7px;top:676px" width="23" height="23" viewBox="0 0 23 23"><circle cx="10" cy="10" r="5.8" fill="#dbe8f8" stroke="#5a7fb5" stroke-width="1.3"/><path d="M14.2 14.2 L18 18" stroke="#e8892a" stroke-width="2.4" stroke-linecap="round"/><path d="M7.5 10 H12.5" stroke="#3a4f7a" stroke-width="1.3"/></svg>
<svg style="left:969.6px;top:676px" width="23" height="23" viewBox="0 0 23 23"><circle cx="10" cy="10" r="5.8" fill="#dbe8f8" stroke="#5a7fb5" stroke-width="1.3"/><path d="M14.2 14.2 L18 18" stroke="#e8892a" stroke-width="2.4" stroke-linecap="round"/><path d="M7.5 10 H12.5 M10 7.5 V12.5" stroke="#3a4f7a" stroke-width="1.3"/></svg>
<svg style="left:994.5px;top:676px" width="23" height="23" viewBox="0 0 23 23"><defs><radialGradient id="bgc" cx="0.5" cy="0.4" r="0.6"><stop offset="0" stop-color="#d8ebfb"/><stop offset="1" stop-color="#6fa9e4"/></radialGradient></defs><circle cx="11.5" cy="12" r="8" fill="url(#bgc)" stroke="#4f7fc0" stroke-width="0.9"/><path d="M6.5 12 L10.5 8 V10.5 H16 V13.5 H10.5 V16 Z" fill="#fff" stroke="#4a78b8" stroke-width="0.9"/></svg>
<svg style="left:1019.4px;top:676px" width="23" height="23" viewBox="0 0 23 23"><defs><radialGradient id="bgc" cx="0.5" cy="0.4" r="0.6"><stop offset="0" stop-color="#d8ebfb"/><stop offset="1" stop-color="#6fa9e4"/></radialGradient></defs><circle cx="11.5" cy="12" r="8" fill="url(#bgc)" stroke="#4f7fc0" stroke-width="0.9"/><path d="M11.5 7 L15.5 11 H13 V16.5 H10 V11 H7.5 Z" fill="#fff" stroke="#4a78b8" stroke-width="0.9"/></svg>
<svg style="left:1044.3px;top:676px" width="23" height="23" viewBox="0 0 23 23"><defs><radialGradient id="bgc" cx="0.5" cy="0.4" r="0.6"><stop offset="0" stop-color="#d8ebfb"/><stop offset="1" stop-color="#6fa9e4"/></radialGradient></defs><circle cx="11.5" cy="12" r="8" fill="url(#bgc)" stroke="#4f7fc0" stroke-width="0.9"/><path d="M11.5 17 L15.5 13 H13 V7.5 H10 V13 H7.5 Z" fill="#fff" stroke="#4a78b8" stroke-width="0.9"/></svg>
<svg style="left:1069.2px;top:676px" width="23" height="23" viewBox="0 0 23 23"><defs><radialGradient id="bgc" cx="0.5" cy="0.4" r="0.6"><stop offset="0" stop-color="#d8ebfb"/><stop offset="1" stop-color="#6fa9e4"/></radialGradient></defs><circle cx="11.5" cy="12" r="8" fill="url(#bgc)" stroke="#4f7fc0" stroke-width="0.9"/><path d="M16.5 12 L12.5 8 V10.5 H7 V13.5 H12.5 V16 Z" fill="#fff" stroke="#4a78b8" stroke-width="0.9"/></svg>
<svg style="left:324px;top:678px" width="20" height="20" viewBox="0 0 20 20"><path d="M4 8 V16 H17 V8 H11" fill="none" stroke="#a9b3c6" stroke-width="1"/><circle cx="7" cy="6" r="3" fill="none" stroke="#a9b3c6" stroke-width="1.5" stroke-dasharray="1.5 1"/><path d="M8 14 H16" stroke="#a9b3c6" stroke-dasharray="1 1"/></svg>
<svg style="left:1364px;top:715px" width="9" height="9" viewBox="0 0 9 9"><path d="M7 1h1v1h-1zM5 3h1v1h-1zM7 3h1v1h-1zM3 5h1v1h-1zM5 5h1v1h-1zM7 5h1v1h-1zM1 7h1v1h-1zM3 7h1v1h-1zM5 7h1v1h-1zM7 7h1v1h-1z" fill="#fff"/></svg>
</body></html>
